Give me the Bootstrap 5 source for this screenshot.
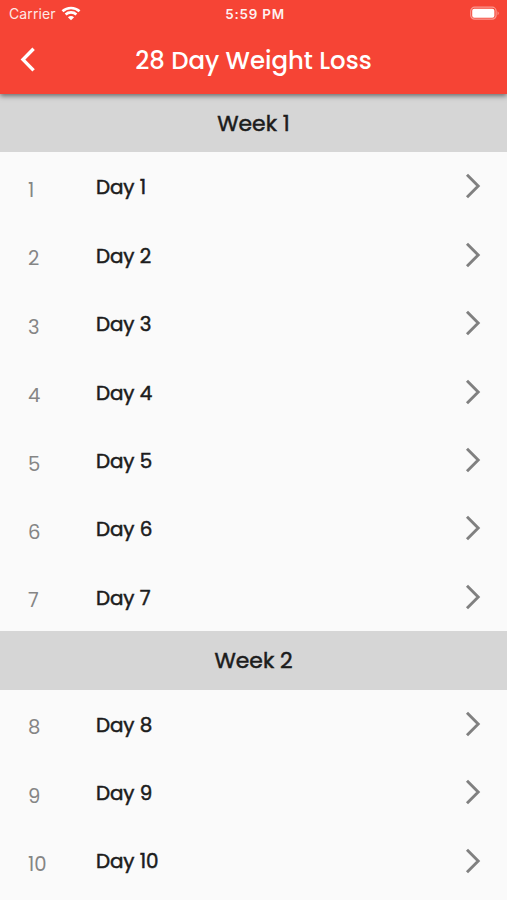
<!DOCTYPE html>
<html lang="en">
<head>
<meta charset="utf-8">
<meta name="viewport" content="width=device-width, initial-scale=1">
<title>28 Day Weight Loss</title>
<link href="https://cdn.jsdelivr.net/npm/bootstrap@5.3.0/dist/css/bootstrap.min.css" rel="stylesheet">
<style>
  html, body { height: 100%; }
  body { background: #fafafa; font-family: Poppins, Inter, "Liberation Sans", sans-serif; color: #1c1c1c; overflow: hidden; }
  .app-header { height: 93.7px; background: #f64435; box-shadow: 0 2px 5px rgba(0,0,0,.5); z-index: 2; }
  .status { height: 27px; padding: 0 7px 0 9px; line-height: 27px; font-family: Inter, "Liberation Sans", sans-serif; }
  .status .side { flex: 1 1 0; }
  .carrier { font-size: 14px; letter-spacing: .1px; opacity: .88; }
  .wifi { margin-left: 5px; margin-top: -1px; }
  .clock { font-size: 13.4px; font-weight: 600; letter-spacing: .8px; opacity: .93; padding-top: 1px; margin-right: -1px; }
  .title-bar { height: 66px; padding: 0 20px; }
  .title-bar h1 { font-size: 24.4px; font-weight: 500; line-height: 66px; padding-top: 1px; }
  .title-side { width: 18px; }
  .week { height: 58.6px; line-height: 60px; background: #d6d6d6; font-size: 21.9px; font-weight: 400; -webkit-text-stroke: .5px #1c1c1c; }
  .day { height: 68.4px; padding: 0 25.5px 0 28px; }
  .num { width: 68px; font-size: 19.6px; font-weight: 400; color: #858585; padding-top: 8.5px; }
  .day-name { font-size: 19.9px; font-weight: 400; padding-top: 3.6px; letter-spacing: -.08px; -webkit-text-stroke: .5px #1c1c1c; }
</style>
<script src="https://cdn.jsdelivr.net/npm/bootstrap@5.3.0/dist/js/bootstrap.bundle.min.js"></script>
</head>
<body>
<header class="app-header position-relative text-white">
  <div class="status d-flex align-items-center">
    <div class="side d-flex align-items-center">
      <span class="carrier">Carrier</span>
      <svg class="wifi" width="20" height="15" viewBox="0 0 20 15" fill="none" stroke="#fff" stroke-width="2.6"><path d="M1.5 5.3C6.2 .8 13.8 .8 18.5 5.3M4.6 8.5C7.6 5.7 12.4 5.7 15.4 8.5"/><path d="M10 14.2 6.9 11.2Q10 8.6 13.1 11.2Z" fill="#fff" stroke="none"/></svg>
    </div>
    <span class="clock">5:59 PM</span>
    <div class="side d-flex align-items-center justify-content-end">
      <svg width="31" height="15" viewBox="0 0 31 15"><rect x="1.7" y="1.2" width="25.4" height="12" rx="4" fill="none" stroke="#fff" stroke-opacity=".45" stroke-width="1.2"/><rect x="3.2" y="2.7" width="22.2" height="9" rx="2" fill="#fff"/><path d="M28.6 5.2Q30.8 7.2 28.6 9.2Z" fill="#fff" fill-opacity=".5"/></svg>
    </div>
  </div>
  <div class="title-bar d-flex align-items-center justify-content-between">
    <svg class="title-side" width="18" height="26" viewBox="0 0 18 26" fill="none" stroke="#fff" stroke-width="3.4"><path d="M13.6 1.8 3 12.6l10.6 10.8"/></svg>
    <h1 class="m-0">28 Day Weight Loss</h1>
    <span class="title-side"></span>
  </div>
</header>
<main id="plan"></main>
<script>
  const weeks = [[1, 1, 7], [2, 8, 10]];
  const chevron = '<svg class="ms-auto" width="17" height="26" viewBox="0 0 17 26" fill="none" stroke="#808080" stroke-width="2.9"><path d="M2 1.8 13.2 13 2 24.2"/></svg>';
  let html = '';
  for (const [week, first, last] of weeks) {
    html += `<section><div class="week text-center">Week ${week}</div><div>`;
    for (let d = first; d <= last; d++) {
      html += `<div class="day d-flex align-items-center"><span class="num">${d}</span><span class="day-name">Day ${d}</span>${chevron}</div>`;
    }
    html += '</div></section>';
  }
  document.getElementById('plan').innerHTML = html;
</script>
</body>
</html>
